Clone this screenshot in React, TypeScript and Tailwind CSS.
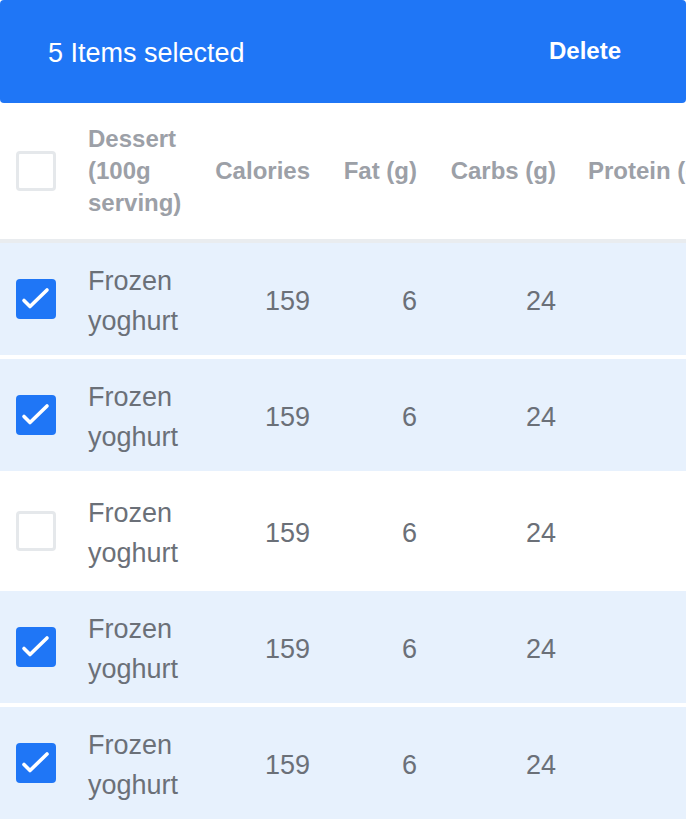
import React, { useState } from 'react';

type Dessert = {
    id: number;
    name: string;
    calories: number;
    fat: number;
    carbs: number;
};

const desserts: Dessert[] = [
    { id: 1, name: 'Frozen yoghurt', calories: 159, fat: 6, carbs: 24 },
    { id: 2, name: 'Frozen yoghurt', calories: 159, fat: 6, carbs: 24 },
    { id: 3, name: 'Frozen yoghurt', calories: 159, fat: 6, carbs: 24 },
    { id: 4, name: 'Frozen yoghurt', calories: 159, fat: 6, carbs: 24 },
    { id: 5, name: 'Frozen yoghurt', calories: 159, fat: 6, carbs: 24 },
];

function Checkbox({ checked, onChange }: { checked: boolean; onChange: () => void }) {
    return (
        <button
            type="button"
            onClick={onChange}
            className={
                checked
                    ? 'flex h-10 w-10 items-center justify-center rounded-[4px] bg-[#1f76f6]'
                    : 'flex h-10 w-10 items-center justify-center rounded-[4px] border-[3px] border-[#e5e8eb] bg-white'
            }
        >
            {checked && (
                <svg viewBox="0 0 40 40" className="h-10 w-10" fill="none">
                    <path d="M8 21.5 L14 27.5 L31 11" stroke="white" strokeWidth="3.6" strokeLinecap="round" strokeLinejoin="round" />
                </svg>
            )}
        </button>
    );
}

export default function App() {
    const [selected, setSelected] = useState<number[]>([1, 2, 4, 5]);

    const toggle = (id: number) =>
        setSelected((s) => (s.includes(id) ? s.filter((x) => x !== id) : [...s, id]));

    const allSelected = selected.length === desserts.length;

    return (
        <div className="h-[824px] w-[686px] overflow-hidden bg-white font-['Liberation_Sans',Arial,sans-serif]">
            {/* selection toolbar */}
            <div className="flex h-[103px] items-center justify-between rounded-[4px] bg-[#1f76f6] pl-[48px] pr-[49px] text-white">
                <span className="mt-1 text-[27px] leading-none">5 Items selected</span>
                <button type="button" className="-mt-0.5 px-4 text-[24px] font-bold leading-none">
                    Delete
                </button>
            </div>

            <table className="w-[940px] table-fixed border-collapse">
                <colgroup>
                    <col className="w-[72px]" />
                    <col className="w-[127px]" />
                    <col className="w-[127px]" />
                    <col className="w-[107px]" />
                    <col className="w-[139px]" />
                    <col className="w-[220px]" />
                    <col />
                </colgroup>
                <thead>
                    <tr className="border-b-4 border-[#e9ecef] text-[24px] font-bold leading-[32px] text-[#9ca0a7]">
                        <th className="py-5 pl-4 pr-4 text-left">
                            <Checkbox
                                checked={allSelected}
                                onChange={() => setSelected(allSelected ? [] : desserts.map((d) => d.id))}
                            />
                        </th>
                        <th className="px-4 py-5 text-left">Dessert (100g serving)</th>
                        <th className="px-4 py-5 text-right whitespace-nowrap">Calories</th>
                        <th className="px-4 py-5 text-right whitespace-nowrap">Fat (g)</th>
                        <th className="px-4 py-5 text-right whitespace-nowrap">Carbs (g)</th>
                        <th className="px-4 py-5 text-left whitespace-nowrap">Protein (g)</th>
                        <th />
                    </tr>
                </thead>
                <tbody className="text-[27px] leading-[40px] text-[#6b7078]">
                    {desserts.map((d) => {
                        const on = selected.includes(d.id);
                        return (
                            <tr key={d.id} className={on ? 'border-b-4 border-white bg-[#e7f1fd]' : 'border-b-4 border-white bg-white'}>
                                <td className="py-4 pl-4 pr-4">
                                    <Checkbox checked={on} onChange={() => toggle(d.id)} />
                                </td>
                                <td className="px-4 pt-[18px] pb-[14px] text-left">{d.name}</td>
                                <td className="px-4 pt-[18px] pb-[14px] text-right">{d.calories}</td>
                                <td className="px-4 pt-[18px] pb-[14px] text-right">{d.fat}</td>
                                <td className="px-4 pt-[18px] pb-[14px] text-right">{d.carbs}</td>
                                <td />
                                <td />
                            </tr>
                        );
                    })}
                </tbody>
            </table>
        </div>
    );
}
